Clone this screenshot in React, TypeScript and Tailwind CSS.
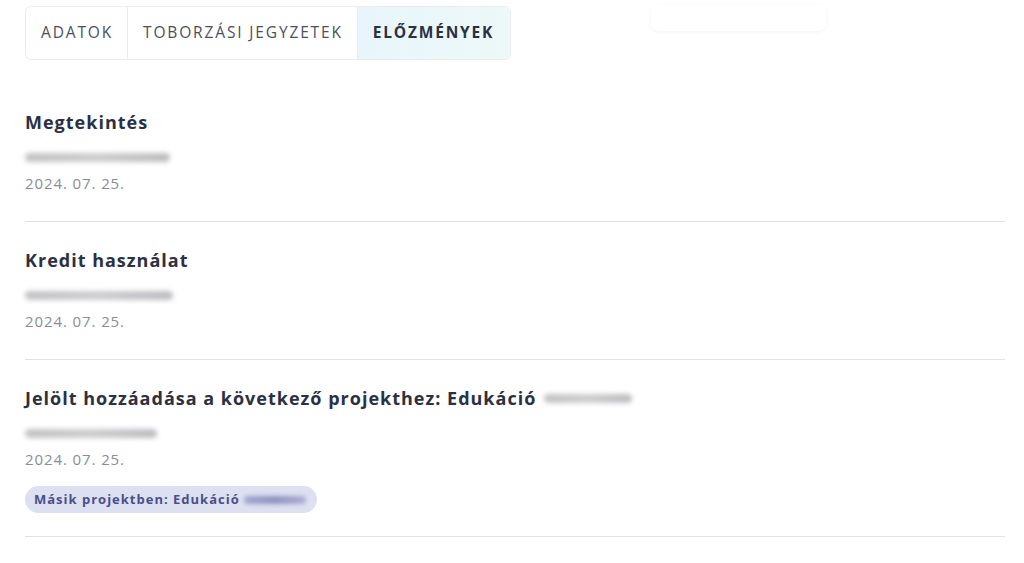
import React from 'react'

const tabs = [
  { id: 'adatok', label: 'ADATOK' },
  { id: 'jegyzetek', label: 'TOBORZÁSI JEGYZETEK' },
  { id: 'elozmenyek', label: 'ELŐZMÉNYEK', active: true },
]

type Entry = {
  title: string
  titleBlur?: boolean
  nameWidth: number
  date: string
  badge?: string
}

const entries: Entry[] = [
  { title: 'Megtekintés', nameWidth: 145, date: '2024. 07. 25.' },
  { title: 'Kredit használat', nameWidth: 148, date: '2024. 07. 25.' },
  {
    title: 'Jelölt hozzáadása a következő projekthez: Edukáció',
    titleBlur: true,
    nameWidth: 132,
    date: '2024. 07. 25.',
    badge: 'Másik projektben: Edukáció',
  },
]

function Blurred({ width, tone = 'gray' }: { width: number; tone?: 'gray' | 'blue' }) {
  return (
    <span
      className={
        tone === 'blue'
          ? 'inline-block h-[8px] rounded-full bg-gradient-to-r from-[#a3a7d0] via-[#8f93c2] to-[#abafd4] blur-[2px]'
          : 'inline-block h-[9px] rounded-full bg-gradient-to-r from-[#c2c2c5] via-[#cdcdd0] to-[#bcbcc0] blur-[2.5px]'
      }
      style={{ width }}
    />
  )
}

export default function App() {
  return (
    <div
      className="min-h-screen bg-white pl-[25px] pr-[19px] pt-[6px]"
      style={{ fontFamily: '"Open Sans", "Noto Sans", sans-serif' }}
    >
      {/* Tabs */}
      <div className="relative flex items-start">
        <div className="flex h-[54px] overflow-hidden rounded-[6px] border border-[#ececec]">
          {tabs.map((tab, i) => (
            <div
              key={tab.id}
              className={
                'flex items-center pl-[15px] pr-[14px] text-[15.5px] ' +
                (i > 0 ? 'border-l border-[#ececec] ' : '') +
                (tab.active
                  ? 'bg-gradient-to-r from-[#e8f5fb] to-[#edf9f8] pr-[16px] tracking-[1.8px] font-bold text-[#2b3042]'
                  : 'tracking-[1.85px] text-[#4a4f5c]')
              }
            >
              {tab.label}
            </div>
          ))}
        </div>
        <div className="ml-[140px] mt-[-1px] h-[26px] w-[175px] rounded-[8px] shadow-[0_1px_4px_rgba(0,0,0,0.05)]" />
      </div>

      {/* History list */}
      <div className="mt-[50px]">
        {entries.map((e, i) => (
          <div
            key={i}
            className={
              'border-b border-[#e2e2e2] ' +
              (i === 0 ? 'pt-0 ' : 'pt-[26px] ') +
              (e.badge ? 'pb-[23px]' : 'pb-[28px]')
            }
          >
            <div className="flex items-center gap-[8px] text-[18px] font-bold leading-[24px] tracking-[1px] text-[#2b3042]">
              <span>{e.title}</span>
              {e.titleBlur && <Blurred width={88} />}
            </div>
            <div className="mt-[18px] flex h-[10px] items-center">
              <Blurred width={e.nameWidth} />
            </div>
            <div className="mt-[11px] text-[15px] leading-[20px] tracking-[0.9px] text-[#8a8d94]">
              {e.date}
            </div>
            {e.badge && (
              <div className="mt-[17px] inline-flex h-[27px] items-center gap-[4px] rounded-full bg-[#dde0f0] pl-[9px] pr-[11px] text-[13px] font-bold tracking-[1px] text-[#4a4f8c]">
                <span>{e.badge}</span>
                <Blurred width={62} tone="blue" />
              </div>
            )}
          </div>
        ))}
      </div>
    </div>
  )
}
